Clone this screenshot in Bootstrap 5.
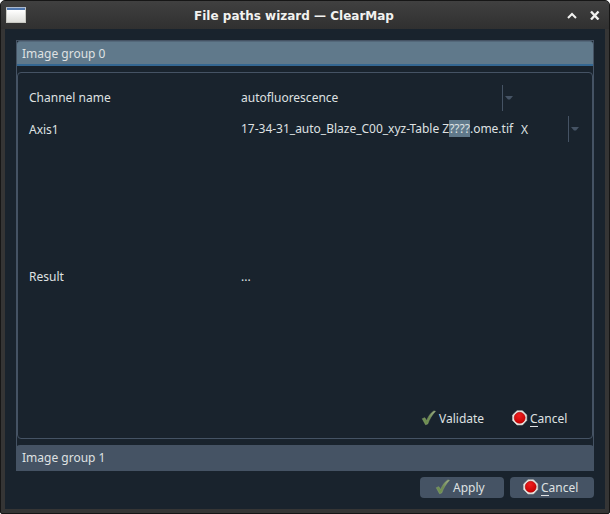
<!DOCTYPE html>
<html lang="en">
<head>
<meta charset="utf-8">
<title>File paths wizard — ClearMap</title>
<link href="https://cdn.jsdelivr.net/npm/bootstrap@5.3.0/dist/css/bootstrap.min.css" rel="stylesheet">
<style>
  html, body { height: 100%; overflow: hidden; }
  body { background: #fff; font: 12px/16px "Noto Sans", sans-serif; color: #dfe1e2; }
  .win { width: 610px; height: 514px; background: #353535; border: 1px solid #161616; border-radius: 5px 5px 2px 2px; padding: 0 4px 4px; }
  .titlebar { height: 28px; margin: 0 -4px; padding: 0 9px 0 5px; background: linear-gradient(#404040, #303030); border-radius: 4px 4px 0 0; color: #f2f2f0; font: bold 12px/16px "DejaVu Sans", sans-serif; }
  .title-icon { width: 22px; }
  .title-buttons { width: 40px; gap: 13px; }
  .title-text { padding-top: 1px; }
  .client { height: 480px; background: #19232d; padding: 11px 11px 0; }
  .toolbox { width: 578px; height: 431px; border: 1px solid #455364; border-bottom: 0; }
  .tab-on { height: 25px; padding: 2px 5px 0; background: #60798b; border-top: 1px solid #54687a; border-bottom: 2px solid #346792; border-radius: 3px 3px 0 0; }
  .pane { height: 367px; margin-top: 6px; border: 1px solid #455364; border-radius: 4px; padding: 9px 11px 0; }
  .tab-off { height: 26px; margin: 6px -1px 0; padding: 0 6px; background: #455364; border-radius: 4px 4px 0 0; }
  .field { height: 32px; }
  .field-result { height: 262px; }
  .label-cell { width: 212px; }
  .name-cell { width: 261px; }
  .path-cell { width: 280px; padding-bottom: 2px; letter-spacing: -.01px; }
  .part-cell { width: 47px; }
  .drop { height: 26px; border-left: 1px solid #455364; padding-left: 2px; }
  .drop-part { margin-bottom: 2px; }
  .picked { background: #60798b; }
  .flats { padding-right: 1px; }
  .flat { width: 91px; height: 21px; gap: 2px; }
  .flat-last { width: 68px; }
  .push { width: 84px; height: 21px; padding-left: 15px; gap: 2px; background: #455364; border-radius: 4px; }
  .push-last { padding-left: 13px; }
  .dialog-buttons { padding-top: 6px; gap: 6px; }
  .key { border-bottom: 1px solid #dfe1e2; line-height: 14px; display: inline-block; }
  svg { display: block; flex: none; }
  .sign { margin-top: -1px; }
</style>
<script src="https://cdn.jsdelivr.net/npm/bootstrap@5.3.0/dist/js/bootstrap.bundle.min.js"></script>
</head>
<body>
<svg width="0" height="0" class="position-absolute" aria-hidden="true">
  <defs>
    <linearGradient id="leaf" x1="0" y1="1" x2="1" y2="0"><stop offset="0" stop-color="#6f9350"/><stop offset=".5" stop-color="#6d8b50"/><stop offset="1" stop-color="#a5b58c"/></linearGradient>
    <radialGradient id="red" cx=".45" cy=".3" r=".7"><stop offset="0" stop-color="#ee2020"/><stop offset="1" stop-color="#c80000"/></radialGradient>
    <symbol id="check" viewBox="0 0 16 16"><path d="M1.300 8.700 3.800 7.700l1.900 3C7.300 6.200 9.700 2.900 12.900.9l1.600.4C11.200 4.800 8.500 8.900 6.700 14L4.500 14.700Z" fill="url(#leaf)" stroke="#8ca273" stroke-width=".5"/></symbol>
    <symbol id="stop" viewBox="0 0 16 16"><path d="M5 .8h5.500L14.700 5v5.500L10.500 14.900H5L.6 10.500V5Z" fill="#eeeeea" stroke="#c8c7c0" stroke-width=".7"/><circle cx="7.700" cy="7.800" r="5.500" fill="url(#red)" stroke="#a80000" stroke-width=".6"/></symbol>
    <symbol id="caret" viewBox="0 0 8 4"><path d="M0 0h8L5 3.500H3Z" fill="#455364"/></symbol>
  </defs>
</svg>
<main class="win">
  <header class="titlebar d-flex align-items-center justify-content-between">
    <div class="title-icon">
      <svg width="20" height="16" viewBox="0 0 20 16"><defs><linearGradient id="sheet" x2="0" y2="1"><stop stop-color="#fff"/><stop offset="1" stop-color="#dfdfdb"/></linearGradient></defs><path d="M0 0h20v16H0Z" fill="#c8c8c2"/><path d="M1 3h18v12H1Z" fill="url(#sheet)"/><path d="M0 0h20v1H0Z" fill="#aab9cf"/><path d="M1 1h18v2H1Z" fill="#5078b0"/></svg>
    </div>
    <span class="title-text">File paths wizard — ClearMap</span>
    <div class="title-buttons d-flex justify-content-end align-items-center">
      <svg width="10" height="10" viewBox="0 0 10 10"><path d="m1 8 4-4 4 4" fill="none" stroke="#f2f2f0" stroke-width="2"/></svg>
      <svg width="10" height="10" viewBox="0 0 10 10"><path d="m1 1.500 7.500 8M8.500 1.500 1 9.500" fill="none" stroke="#f2f2f0" stroke-width="2.400"/></svg>
    </div>
  </header>
  <div class="client">
    <section class="toolbox">
      <div class="tab-on d-flex align-items-center">Image group 0</div>
      <div class="pane">
        <div class="field d-flex align-items-center">
          <div class="label-cell">Channel name</div><div class="name-cell">autofluorescence</div>
          <div class="drop d-flex align-items-center"><svg width="8" height="4"><use href="#caret"/></svg></div>
        </div>
        <div class="field d-flex align-items-center">
          <div class="label-cell">Axis1</div>
          <div class="path-cell text-nowrap">17-34-31_auto_Blaze_C00_xyz-Table Z<span class="picked">????</span>.ome.tif</div>
          <div class="part-cell">X</div>
          <div class="drop drop-part d-flex align-items-center"><svg width="8" height="4"><use href="#caret"/></svg></div>
        </div>
        <div class="field-result d-flex align-items-center"><div class="label-cell">Result</div><div>...</div></div>
        <div class="flats d-flex justify-content-end">
          <div class="flat d-flex align-items-center"><svg class="sign" width="16" height="16"><use href="#check"/></svg><span>Validate</span></div>
          <div class="flat flat-last d-flex align-items-center"><svg class="sign" width="16" height="16"><use href="#stop"/></svg><span><span class="key">C</span>ancel</span></div>
        </div>
      </div>
      <div class="tab-off d-flex align-items-center">Image group 1</div>
    </section>
    <footer class="dialog-buttons d-flex justify-content-end">
      <div class="push d-flex align-items-center"><svg class="sign" width="16" height="16"><use href="#check"/></svg><span>Apply</span></div>
      <div class="push push-last d-flex align-items-center"><svg class="sign" width="16" height="16"><use href="#stop"/></svg><span><span class="key">C</span>ancel</span></div>
    </footer>
  </div>
</main>
</body>
</html>
